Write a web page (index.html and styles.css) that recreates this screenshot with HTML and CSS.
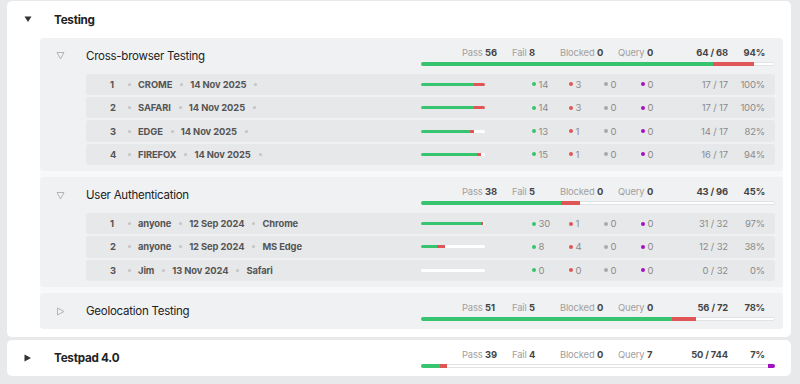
FILE: index.html
```html
<!DOCTYPE html>
<html lang="en">

<head>
    <meta charset="UTF-8">
    <meta name="viewport" content="width=device-width, initial-scale=1.0">
    <title>Runs</title>
    <link rel="stylesheet" href="styles.css">
</head>

<body>
<div class="page">

    <!-- folder: Testing (open) -->
    <div class="card main">
        <div class="head">
            <span class="tog"><svg width="8" height="7" viewBox="0 0 8 7"><polygon points="0.5,0.5 7.5,0.5 4,6" fill="#333"/></svg></span>
            <span class="name">Testing</span>
        </div>

        <div class="sections">
            <div class="section">
                <div class="head">
                    <span class="tog"><svg width="9" height="9" viewBox="0 0 9 9"><polygon points="1,1.5 8,1.5 4.5,8" fill="none" stroke="#b4b4b4" stroke-width="1"/></svg></span>
                    <span class="title">Cross-browser Testing</span>
                    <div class="stats">
                        <div class="line">
                            <span>Pass <b>56</b></span>
                            <span>Fail <b>8</b></span>
                            <span>Blocked <b>0</b></span>
                            <span>Query <b>0</b></span>
                            <b class="ratio">64 / 68</b>
                            <b class="pct">94%</b>
                        </div>
                        <div class="bar"><i class="ok" style="width:82.35%"></i><i class="ko" style="width:11.76%"></i></div>
                    </div>
                </div>
                <div class="rows">
                    <div class="row">
                        <div class="meta"><span class="num">1</span><span class="m">CROME</span><span class="m">14 Nov 2025</span><span class="m"></span></div>
                        <div class="nums">
                            <div class="mini"><i class="ok" style="width:82.35%"></i><i class="ko" style="width:17.65%"></i></div>
                            <span class="c p">14</span><span class="c f">3</span><span class="c b">0</span><span class="c q">0</span>
                            <span class="ratio">17 / 17</span><span class="pct">100%</span>
                        </div>
                    </div>
                    <div class="row">
                        <div class="meta"><span class="num">2</span><span class="m">SAFARI</span><span class="m">14 Nov 2025</span><span class="m"></span></div>
                        <div class="nums">
                            <div class="mini"><i class="ok" style="width:82.35%"></i><i class="ko" style="width:17.65%"></i></div>
                            <span class="c p">14</span><span class="c f">3</span><span class="c b">0</span><span class="c q">0</span>
                            <span class="ratio">17 / 17</span><span class="pct">100%</span>
                        </div>
                    </div>
                    <div class="row">
                        <div class="meta"><span class="num">3</span><span class="m">EDGE</span><span class="m">14 Nov 2025</span><span class="m"></span></div>
                        <div class="nums">
                            <div class="mini"><i class="ok" style="width:76.47%"></i><i class="ko" style="width:5.88%"></i></div>
                            <span class="c p">13</span><span class="c f">1</span><span class="c b">0</span><span class="c q">0</span>
                            <span class="ratio">14 / 17</span><span class="pct">82%</span>
                        </div>
                    </div>
                    <div class="row">
                        <div class="meta"><span class="num">4</span><span class="m">FIREFOX</span><span class="m">14 Nov 2025</span><span class="m"></span></div>
                        <div class="nums">
                            <div class="mini"><i class="ok" style="width:88.24%"></i><i class="ko" style="width:5.88%"></i></div>
                            <span class="c p">15</span><span class="c f">1</span><span class="c b">0</span><span class="c q">0</span>
                            <span class="ratio">16 / 17</span><span class="pct">94%</span>
                        </div>
                    </div>
                </div>
            </div>

            <div class="section">
                <div class="head">
                    <span class="tog"><svg width="9" height="9" viewBox="0 0 9 9"><polygon points="1,1.5 8,1.5 4.5,8" fill="none" stroke="#b4b4b4" stroke-width="1"/></svg></span>
                    <span class="title">User Authentication</span>
                    <div class="stats">
                        <div class="line">
                            <span>Pass <b>38</b></span>
                            <span>Fail <b>5</b></span>
                            <span>Blocked <b>0</b></span>
                            <span>Query <b>0</b></span>
                            <b class="ratio">43 / 96</b>
                            <b class="pct">45%</b>
                        </div>
                        <div class="bar"><i class="ok" style="width:39.58%"></i><i class="ko" style="width:5.21%"></i></div>
                    </div>
                </div>
                <div class="rows">
                    <div class="row">
                        <div class="meta"><span class="num">1</span><span class="m">anyone</span><span class="m">12 Sep 2024</span><span class="m">Chrome</span></div>
                        <div class="nums">
                            <div class="mini"><i class="ok" style="width:93.75%"></i><i class="ko" style="width:3.13%"></i></div>
                            <span class="c p">30</span><span class="c f">1</span><span class="c b">0</span><span class="c q">0</span>
                            <span class="ratio">31 / 32</span><span class="pct">97%</span>
                        </div>
                    </div>
                    <div class="row">
                        <div class="meta"><span class="num">2</span><span class="m">anyone</span><span class="m">12 Sep 2024</span><span class="m">MS Edge</span></div>
                        <div class="nums">
                            <div class="mini"><i class="ok" style="width:25%"></i><i class="ko" style="width:12.5%"></i></div>
                            <span class="c p">8</span><span class="c f">4</span><span class="c b">0</span><span class="c q">0</span>
                            <span class="ratio">12 / 32</span><span class="pct">38%</span>
                        </div>
                    </div>
                    <div class="row">
                        <div class="meta"><span class="num">3</span><span class="m">Jim</span><span class="m">13 Nov 2024</span><span class="m">Safari</span></div>
                        <div class="nums">
                            <div class="mini"></div>
                            <span class="c p">0</span><span class="c f">0</span><span class="c b">0</span><span class="c q">0</span>
                            <span class="ratio">0 / 32</span><span class="pct">0%</span>
                        </div>
                    </div>
                </div>
            </div>

            <div class="section closed">
                <div class="head">
                    <span class="tog"><svg width="9" height="9" viewBox="0 0 9 9"><polygon points="1.5,1 8,4.5 1.5,8" fill="none" stroke="#b4b4b4" stroke-width="1"/></svg></span>
                    <span class="title">Geolocation Testing</span>
                    <div class="stats">
                        <div class="line">
                            <span>Pass <b>51</b></span>
                            <span>Fail <b>5</b></span>
                            <span>Blocked <b>0</b></span>
                            <span>Query <b>0</b></span>
                            <b class="ratio">56 / 72</b>
                            <b class="pct">78%</b>
                        </div>
                        <div class="bar"><i class="ok" style="width:70.83%"></i><i class="ko" style="width:6.94%"></i></div>
                    </div>
                </div>
            </div>
        </div>
    </div>

    <!-- folder: Testpad 4.0 (closed) -->
    <div class="card closed">
        <div class="head">
            <span class="tog"><svg width="8" height="8" viewBox="0 0 8 8"><polygon points="0.5,0.5 7,4 0.5,7.5" fill="#333"/></svg></span>
            <span class="name">Testpad 4.0</span>
            <div class="stats">
                <div class="line">
                    <span>Pass <b>39</b></span>
                    <span>Fail <b>4</b></span>
                    <span>Blocked <b>0</b></span>
                    <span>Query <b>7</b></span>
                    <b class="ratio">50 / 744</b>
                    <b class="pct">7%</b>
                </div>
                <div class="bar"><i class="ok" style="width:5.24%"></i><i class="ko" style="width:2%"></i><i class="qu end" style="width:2%"></i></div>
            </div>
        </div>
    </div>

</div>
</body>

</html>
```

FILE: styles.css
```css
* {
    box-sizing: border-box;
}

body {
    margin: 0;
    background: #e8e9eb;
    font-family: Inter, "Liberation Sans", sans-serif;
    color: #333;
}

.page {
    padding: 1px 9px 0 7px;
}

.card {
    background: #fff;
    border-radius: 5px;
    margin-bottom: 3px;
}

.main {
    padding-bottom: 8px;
}

.head {
    display: flex;
    align-items: center;
}

.card > .head {
    height: 37px;
    padding: 0 16px 0 17px;
}

.card.closed > .head {
    height: 36px;
}

.tog {
    width: 30px;
    display: flex;
    align-items: center;
}

.tog svg {
    display: block;
}

.name {
    flex: 1;
    font-size: 11.7px;
    letter-spacing: -0.25px;
    font-weight: 700;
    color: #222;
}

.sections {
    margin: 0 8px 0 33px;
    background: #f7f8f9;
    border-radius: 4px;
    display: flex;
    flex-direction: column;
    gap: 6px;
}

.section {
    background: #f0f1f3;
    border-radius: 4px;
}

.section > .head {
    height: 35.5px;
    padding: 0 8px 0 16px;
}

.section.closed > .head {
    height: 36px;
}

.title {
    flex: 1;
    font-size: 11.5px;
    letter-spacing: -0.25px;
    color: #222;
}

/* stats block on the right */
.stats {
    width: 354px;
}

.line {
    display: grid;
    grid-template-columns: 50px 48px 58px 63px 47px 37px;
    padding: 0 10px 0 41px;
    font-size: 9.4px;
    letter-spacing: -0.15px;
    line-height: 13px;
    color: #a0a0a0;
    margin-bottom: 3px;
    white-space: nowrap;
}

.line b {
    color: #444;
    font-weight: 700;
}

.ratio,
.pct {
    text-align: right;
}

.bar {
    display: flex;
    height: 4px;
    background: #fff;
    border-radius: 2px;
    box-shadow: inset 0 0 0 1px #e1e2e4;
    overflow: hidden;
}

.bar i,
.mini i {
    display: block;
    height: 100%;
}

.ok {
    background: #36c46f;
}

.ko {
    background: #e05656;
}

.qu {
    background: #a211c1;
}

.end {
    margin-left: auto;
}

/* run rows */
.rows {
    display: flex;
    flex-direction: column;
    gap: 1.8px;
    padding: 0 8px 6px 46px;
}

.row {
    display: flex;
    align-items: center;
    height: 21.6px;
    background: #e7e8ea;
    border-radius: 3px;
}

.meta {
    flex: 1;
    display: flex;
    align-items: center;
    padding-left: 24px;
    font-size: 9.4px;
    letter-spacing: -0.1px;
    font-weight: 700;
    color: #555;
    white-space: nowrap;
}

.num {
    width: 18px;
}

.m {
    display: flex;
    align-items: center;
    margin-right: 8px;
}

.m::before {
    content: "";
    width: 3px;
    height: 3px;
    border-radius: 50%;
    background: #c4c4c4;
    margin-right: 7px;
}

.nums {
    width: 354px;
    display: grid;
    grid-template-columns: 111px 37px 35px 37px 40px 47px 37px;
    align-items: center;
    padding-right: 10px;
    font-size: 9.5px;
    letter-spacing: -0.15px;
    color: #8a8a8a;
}

.mini {
    display: flex;
    width: 64px;
    height: 3px;
    background: #fff;
    border-radius: 2px;
    overflow: hidden;
}

.c {
    display: flex;
    align-items: center;
}

.c::before {
    content: "";
    width: 4px;
    height: 4px;
    border-radius: 50%;
    margin-right: 2.5px;
}

.c.p::before {
    background: #36c46f;
}

.c.f::before {
    background: #e05656;
}

.c.b::before {
    background: #a9a9a9;
}

.c.q::before {
    background: #a211c1;
}
```
